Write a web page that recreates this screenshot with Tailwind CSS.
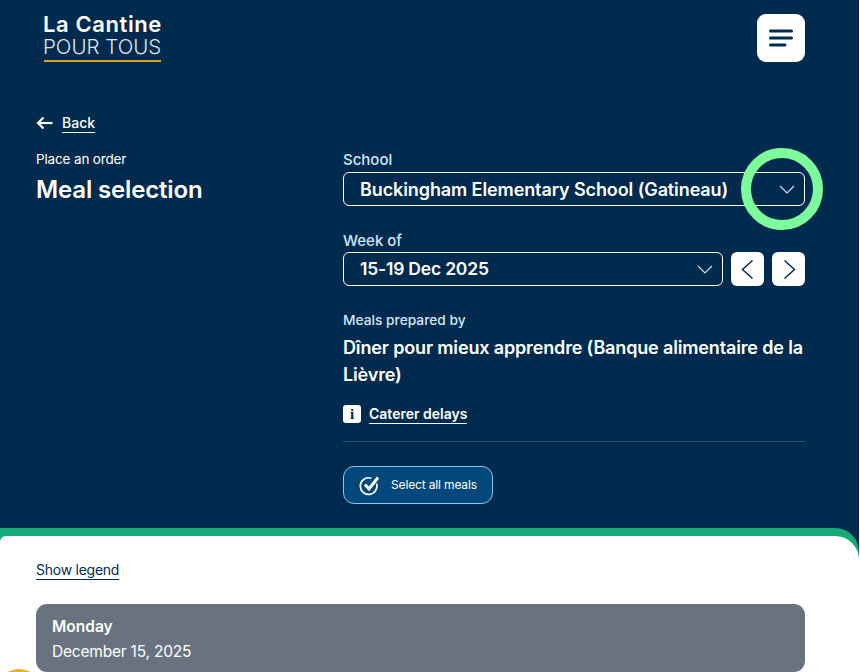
<!DOCTYPE html>
<html lang="en">
<head>
    <meta charset="UTF-8">
    <meta name="viewport" content="width=device-width, initial-scale=1.0">
    <title>Meal selection</title>
    <script src="https://cdn.jsdelivr.net/npm/@tailwindcss/browser@4"></script>
</head>
<body class="bg-white">
<div class="relative w-[859px] h-[672px] overflow-hidden bg-[#012b4e] font-['Inter',sans-serif] text-white">

    <!-- Header -->
    <header class="flex justify-between pl-[43px] pr-[54px] pt-[14px] h-[113px]">
        <div class="w-[120px]">
            <div class="text-[22px] leading-[20px] font-semibold tracking-[0.6px] whitespace-nowrap">La Cantine</div>
            <div class="text-[20.500px] leading-[21px] mt-[2px] font-light whitespace-nowrap text-[#dfe6ec]">POUR TOUS</div>
            <div class="h-[2px] mt-[3px] ml-[1px] w-[117px] bg-[#e0a11b]"></div>
        </div>
        <button class="w-[48px] h-[48px] rounded-[9px] bg-white flex items-center justify-center">
            <svg width="24" height="20" viewBox="0 0 24 20" fill="none" stroke="#012b4e" stroke-width="3" stroke-linecap="round">
                <path d="M1.500 3H22.500"/><path d="M1.500 10H22.500"/><path d="M1.500 17H16"/>
            </svg>
        </button>
    </header>

    <!-- Main -->
    <main class="pl-[36px] pr-[54px]">
        <a class="flex items-center gap-[9px] h-[20px] text-[14px] font-medium">
            <svg width="17" height="14" viewBox="0 0 17 14" fill="none" stroke="white" stroke-width="2.200">
                <path d="M16.500 7H2"/><path d="M7.500 1.500L2 7L7.500 12.500"/>
            </svg>
            <span class="border-b border-white leading-[19px]">Back</span>
        </a>
        <div class="flex mt-[14px]">
            <div class="w-[307px] pt-[2px]">
                <div class="text-[13.500px] leading-[20px] tracking-[-0.15px]">Place an order</div>
                <h1 class="mt-[6px] text-[24px] leading-[30px] font-semibold tracking-[-0.15px]">Meal selection</h1>
            </div>
            <div class="w-[462px]">
                <label class="block text-[15px] leading-[18px] font-medium text-[#cfe6f7] mt-[4px]">School</label>
                <div class="mt-[3px] h-[34px] border border-white rounded-md flex items-center justify-between pl-[16px] pr-[9px]">
                    <span class="text-[18px] font-semibold tracking-[-0.1px] whitespace-nowrap">Buckingham Elementary School (Gatineau)</span>
                    <svg width="16" height="9" viewBox="0 0 16 9" fill="none" stroke="#cfe0ec" stroke-width="1.200"><path d="M1 1L8 8L15 1"/></svg>
                </div>
                <label class="block text-[15px] leading-[18px] font-medium text-[#cfe6f7] mt-[26px]">Week of</label>
                <div class="flex gap-[8px] mt-[2px]">
                    <div class="w-[380px] h-[34px] border border-white rounded-md flex items-center justify-between pl-[16px] pr-[9px]">
                        <span class="text-[17.500px] font-semibold tracking-[-0.2px]">15-19 Dec 2025</span>
                        <svg width="16" height="9" viewBox="0 0 16 9" fill="none" stroke="#cfe0ec" stroke-width="1.200"><path d="M1 1L8 8L15 1"/></svg>
                    </div>
                    <button class="w-[33px] h-[34px] rounded-md bg-white flex items-center justify-center">
                        <svg width="13" height="21" viewBox="0 0 13 21" fill="none" stroke="#012b4e" stroke-width="1.500"><path d="M11.500 1.500L1.500 10.500L11.500 19.500"/></svg>
                    </button>
                    <button class="w-[33px] h-[34px] rounded-md bg-white flex items-center justify-center pl-[1px]">
                        <svg width="13" height="21" viewBox="0 0 13 21" fill="none" stroke="#012b4e" stroke-width="1.500"><path d="M1.500 1.500L11.500 10.500L1.500 19.500"/></svg>
                    </button>
                </div>
                <div class="mt-[25px] text-[13.750px] leading-[18px] font-medium text-[#cfe6f7]">Meals prepared by</div>
                <p class="mt-[5px] text-[18px] leading-[27px] font-semibold tracking-[-0.15px]">Dîner pour mieux apprendre (Banque alimentaire de la Lièvre)</p>
                <div class="flex items-center gap-[8px] mt-[16px]">
                    <span class="w-[18px] h-[18px] rounded-[3px] bg-white flex items-center justify-center text-[#012b4e] text-[15px] font-bold font-['Liberation_Serif',serif]">i</span>
                    <span class="border-b border-white text-[14px] leading-[19px] font-semibold">Caterer delays</span>
                </div>
                <div class="h-px bg-[#2a4c69] mt-[17px]"></div>
                <button class="mt-[24px] w-[150px] h-[38px] rounded-[11px] border border-[#8cc4ee] bg-[#02487d] flex items-center pl-[15px] gap-[11px]">
                    <svg width="21" height="21" viewBox="0 0 21 21" fill="none" stroke="white">
                        <path stroke-width="1.700" d="M17.500 8.500A8.300 8.300 0 1 1 12.500 3.300"/>
                        <path stroke-width="3" d="M6 9.500L10 14L19 2.500"/>
                    </svg>
                    <span class="text-[12px] tracking-[-0.15px]">Select all meals</span>
                </button>
            </div>
        </div>
    </main>

    <!-- Meal list panel -->
    <section class="absolute left-0 top-[528px] w-[859px] h-[200px] rounded-tr-[24px] bg-[#15ab7a] pt-[8px]">
        <div class="h-full rounded-tr-[24px] rounded-tl-[6px] bg-white pl-[36px] pr-[54px] pt-[21px]">
            <a class="inline-block border-b border-[#012b4e] text-[14px] leading-[19px] tracking-[-0.25px] text-[#012b4e]">Show legend</a>
            <div class="mt-[23px] h-[68px] rounded-[11px] bg-[#68737f] px-[16px] pt-[12px]">
                <div class="text-[15.500px] leading-[22px] font-semibold">Monday</div>
                <div class="text-[15.500px] leading-[22px] mt-[3px] tracking-[-0.2px]">December 15, 2025</div>
            </div>
        </div>
    </section>

    <!-- Highlight ring and corner badge -->
    <div class="absolute left-[741px] top-[148px] w-[82px] h-[82px] rounded-full border-[10px] border-[#7dfc9c]"></div>
    <div class="absolute left-[-3px] top-[669px] w-[44px] h-[44px] rounded-full bg-[#e9b023]"></div>
</div>
</body>
</html>
